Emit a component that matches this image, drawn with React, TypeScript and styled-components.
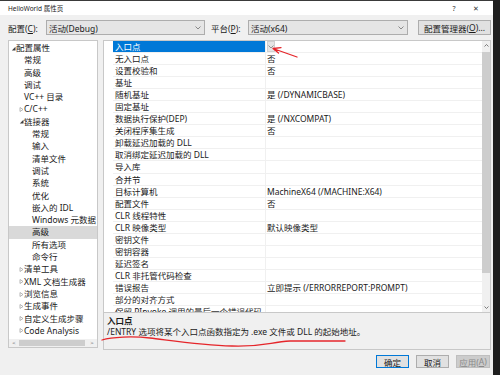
import React from 'react';
import styled, { createGlobalStyle } from 'styled-components';

const GlobalStyle = createGlobalStyle`
  html, body {
    margin: 0;
    padding: 0;
    background: #1f1f1f;
  }
  * {
    box-sizing: border-box;
  }
`;

const FONT = `"Noto Sans", "Noto Sans CJK SC", sans-serif`;

const Screen = styled.div`
  position: relative;
  width: 500px;
  height: 375px;
  display: flex;
  background: #1f1f1f;
  overflow: hidden;
  font-family: ${FONT};
  color: #1a1a1a;
`;

const Dialog = styled.div`
  width: 493px;
  height: 375px;
  border-top: 1px solid #3a3a3a;
  background: #f0f0f0;
  display: flex;
  flex-direction: column;
`;

const TitleBar = styled.div`
  height: 14px;
  flex: none;
  background: #ffffff;
  display: flex;
  align-items: center;
  padding: 0 6px 0 8px;
  font-size: 6.5px;
`;

const Title = styled.div`
  flex: 1;
`;

const TitleButton = styled.div`
  width: 22px;
  text-align: center;
  font-size: 7px;
  color: #333;
`;

const Body = styled.div`
  flex: 1;
  min-height: 0;
  display: flex;
  flex-direction: column;
  padding: 5px 2px 0 8px;
`;

const ConfigRow = styled.div`
  height: 15px;
  flex: none;
  display: flex;
  align-items: center;
  font-size: 8.5px;
`;

const Label = styled.div<{ w: number }>`
  width: ${p => p.w}px;
  white-space: nowrap;
`;

const Combo = styled.div<{ w: number, gap?: number }>`
  width: ${p => p.w}px;
  height: 15px;
  border: 1px solid #adadad;
  background: #e5e5e5;
  display: flex;
  align-items: center;
  padding: 0 3px 0 2px;
  margin-right: ${p => p.gap ?? 6}px;
`;

const ComboText = styled.div`
  flex: 1;
`;

const Chevron = styled.svg`
  width: 6px;
  height: 4px;
  flex: none;
`;

const PushButton = styled.div<{ w: number, kind?: 'default' | 'normal' | 'disabled' }>`
  width: ${p => p.w}px;
  height: ${p => p.kind ? 13 : 15}px;
  display: flex;
  align-items: center;
  justify-content: center;
  font-size: 8.5px;
  white-space: nowrap;
  background: ${p => p.kind === 'disabled' ? '#cccccc' : '#e1e1e1'};
  color: ${p => p.kind === 'disabled' ? '#8a8a8a' : '#1a1a1a'};
  border: 1px solid ${p => p.kind === 'default' ? '#0078d7' : p.kind === 'disabled' ? '#bfbfbf' : '#adadad'};
`;

const Main = styled.div`
  margin-top: 5px;
  height: 310px;
  flex: none;
  display: flex;
  gap: 5px;
  overflow: hidden;
`;

const TreePanel = styled.div`
  width: 90px;
  height: 308px;
  background: #ffffff;
  border: 1px solid #c8c8c8;
  display: flex;
  flex-direction: column;
  overflow: hidden;
`;

const TreeList = styled.div`
  flex: 1;
  min-height: 0;
  overflow: hidden;
  padding-top: 1px;
`;

const TreeRow = styled.div<{ level: number, selected?: boolean }>`
  height: 12.3px;
  line-height: 12.3px;
  font-size: 8.5px;
  white-space: nowrap;
  display: flex;
  align-items: center;
  padding-left: ${p => [1, 9, 17][p.level]}px;
  background: ${p => p.selected ? '#d9d9d9' : 'transparent'};
`;

const Expander = styled.div`
  width: 6px;
  display: flex;
  align-items: center;
  justify-content: center;
`;

const HScroll = styled.div`
  height: 8px;
  flex: none;
  display: flex;
  align-items: center;
  background: #f0f0f0;
  font-size: 6px;
  color: #606060;
`;

const ScrollArrow = styled.div`
  width: 10px;
  text-align: center;
  line-height: 8px;
`;

const HThumb = styled.div`
  flex: 1;
  height: 6px;
  margin-right: 2px;
  background: #cdcdcd;
`;

const RightColumn = styled.div`
  flex: 1;
  min-width: 0;
  display: flex;
  flex-direction: column;
`;

const GridPanel = styled.div`
  height: 273px;
  flex: none;
  background: #ffffff;
  border: 1px solid #c8c8c8;
  display: flex;
  overflow: hidden;
`;

const GridGutter = styled.div`
  width: 9px;
  background: #ffffff;
`;

const GridRows = styled.div`
  flex: 1;
  min-width: 0;
  overflow: hidden;
`;

const GridRow = styled.div`
  height: 12.05px;
  display: grid;
  grid-template-columns: 153px 1fr;
  border-bottom: 1px solid #f0f0f0;
  font-size: 8.5px;
  line-height: 11px;
  white-space: nowrap;
`;

const NameCell = styled.div<{ selected?: boolean }>`
  padding-left: 2px;
  border-right: 1px solid #f0f0f0;
  overflow: hidden;
  background: ${p => p.selected ? '#0078d7' : 'transparent'};
  color: ${p => p.selected ? '#ffffff' : '#1a1a1a'};
`;

const ValueCell = styled.div`
  padding-left: 1px;
  display: flex;
  justify-content: space-between;
  overflow: hidden;
`;

const DropButton = styled.div`
  width: 8px;
  height: 11px;
  background: #e5e5e5;
  border: 1px solid #d0d0d0;
  display: flex;
  align-items: center;
  justify-content: center;
`;

const VScroll = styled.div`
  width: 8px;
  flex: none;
  background: #f0f0f0;
  display: flex;
  flex-direction: column;
`;

const VArrow = styled.div`
  height: 9px;
  flex: none;
  display: flex;
  align-items: center;
  justify-content: center;
`;

const VThumb = styled.div`
  margin-top: 2px;
  height: 221px;
  flex: none;
  background: #cdcdcd;
`;

const VTrack = styled.div`
  flex: 1;
`;

const Description = styled.div`
  height: 37px;
  flex: none;
  border: 1px solid #c8c8c8;
  border-top: none;
  padding: 2px 3px;
  font-size: 8.5px;
  line-height: 11px;
`;

const DescTitle = styled.div`
  font-weight: bold;
`;

const ButtonRow = styled.div`
  margin-top: 5px;
  display: flex;
  justify-content: flex-end;
  gap: 7px;
  padding-right: 1px;
`;

const Overlay = styled.svg`
  position: absolute;
  left: 0;
  top: 0;
  width: 500px;
  height: 375px;
  pointer-events: none;
`;

const ChevronDown = ({ color = '#707070' }: { color?: string }) => (
  <Chevron viewBox="0 0 6 4">
    <path d="M0.5 0.5 L3 3 L5.5 0.5" fill="none" stroke={color} strokeWidth="0.8" />
  </Chevron>
);

const TreeArrow = ({ open }: { open: boolean }) => (
  <svg width="5" height="5" viewBox="0 0 5 5">
    {open
      ? <path d="M4.5 0.8 L4.5 4.5 L0.8 4.5 Z" fill="#404040" />
      : <path d="M1 0.5 L4 2.5 L1 4.5 Z" fill="none" stroke="#9a9a9a" strokeWidth="0.7" />}
  </svg>
);

type TreeItem = { label: string, level: number, arrow?: 'open' | 'closed', selected?: boolean };

const tree: TreeItem[] = [
  { label: '配置属性', level: 0, arrow: 'open' },
  { label: '常规', level: 1 },
  { label: '高级', level: 1 },
  { label: '调试', level: 1 },
  { label: 'VC++ 目录', level: 1 },
  { label: 'C/C++', level: 1, arrow: 'closed' },
  { label: '链接器', level: 1, arrow: 'open' },
  { label: '常规', level: 2 },
  { label: '输入', level: 2 },
  { label: '清单文件', level: 2 },
  { label: '调试', level: 2 },
  { label: '系统', level: 2 },
  { label: '优化', level: 2 },
  { label: '嵌入的 IDL', level: 2 },
  { label: 'Windows 元数据', level: 2 },
  { label: '高级', level: 2, selected: true },
  { label: '所有选项', level: 2 },
  { label: '命令行', level: 2 },
  { label: '清单工具', level: 1, arrow: 'closed' },
  { label: 'XML 文档生成器', level: 1, arrow: 'closed' },
  { label: '浏览信息', level: 1, arrow: 'closed' },
  { label: '生成事件', level: 1, arrow: 'closed' },
  { label: '自定义生成步骤', level: 1, arrow: 'closed' },
  { label: 'Code Analysis', level: 1, arrow: 'closed' },
];

const props: [string, string][] = [
  ['入口点', ''],
  ['无入口点', '否'],
  ['设置校验和', '否'],
  ['基址', ''],
  ['随机基址', '是 (/DYNAMICBASE)'],
  ['固定基址', ''],
  ['数据执行保护(DEP)', '是 (/NXCOMPAT)'],
  ['关闭程序集生成', '否'],
  ['卸载延迟加载的 DLL', ''],
  ['取消绑定延迟加载的 DLL', ''],
  ['导入库', ''],
  ['合并节', ''],
  ['目标计算机', 'MachineX64 (/MACHINE:X64)'],
  ['配置文件', '否'],
  ['CLR 线程特性', ''],
  ['CLR 映像类型', '默认映像类型'],
  ['密钥文件', ''],
  ['密钥容器', ''],
  ['延迟签名', ''],
  ['CLR 非托管代码检查', ''],
  ['错误报告', '立即提示 (/ERRORREPORT:PROMPT)'],
  ['部分的对齐方式', ''],
  ['保留 PInvoke 调用的最后一个错误代码', ''],
];

export default function App() {
  return (
    <Screen>
      <GlobalStyle />
      <Dialog>
        <TitleBar>
          <Title>HelloWorld 属性页</Title>
          <TitleButton>?</TitleButton>
          <TitleButton>✕</TitleButton>
        </TitleBar>
        <Body>
          <ConfigRow>
            <Label w={38}>配置(<u>C</u>):</Label>
            <Combo w={159}>
              <ComboText>活动(Debug)</ComboText>
              <ChevronDown />
            </Combo>
            <Label w={37}>平台(<u>P</u>):</Label>
            <Combo w={160} gap={10}>
              <ComboText>活动(x64)</ComboText>
              <ChevronDown />
            </Combo>
            <PushButton w={73}>配置管理器(<u>O</u>)...</PushButton>
          </ConfigRow>

          <Main>
            <TreePanel>
              <TreeList>
                {tree.map((t, i) => (
                  <TreeRow key={i} level={t.level} selected={t.selected}>
                    <Expander>{t.arrow && <TreeArrow open={t.arrow === 'open'} />}</Expander>
                    {t.label}
                  </TreeRow>
                ))}
              </TreeList>
              <HScroll>
                <ScrollArrow>&lt;</ScrollArrow>
                <HThumb />
                <ScrollArrow>&gt;</ScrollArrow>
              </HScroll>
            </TreePanel>

            <RightColumn>
              <GridPanel>
                <GridGutter />
                <GridRows>
                  {props.map(([name, value], i) => (
                    <GridRow key={i}>
                      <NameCell selected={i === 0}>{name}</NameCell>
                      <ValueCell>
                        {value}
                        {i === 0 && (
                          <DropButton>
                            <ChevronDown color="#808080" />
                          </DropButton>
                        )}
                      </ValueCell>
                    </GridRow>
                  ))}
                </GridRows>
                <VScroll>
                  <VArrow>
                    <svg width="5" height="3" viewBox="0 0 5 3">
                      <path d="M0.5 2.5 L2.5 0.5 L4.5 2.5" fill="none" stroke="#606060" strokeWidth="0.8" />
                    </svg>
                  </VArrow>
                  <VThumb />
                  <VTrack />
                  <VArrow>
                    <svg width="5" height="3" viewBox="0 0 5 3">
                      <path d="M0.5 0.5 L2.5 2.5 L4.5 0.5" fill="none" stroke="#606060" strokeWidth="0.8" />
                    </svg>
                  </VArrow>
                </VScroll>
              </GridPanel>
              <Description>
                <DescTitle>入口点</DescTitle>
                <div>/ENTRY 选项将某个入口点函数指定为 .exe 文件或 DLL 的起始地址。</div>
              </Description>
            </RightColumn>
          </Main>

          <ButtonRow>
            <PushButton w={33} kind="default">确定</PushButton>
            <PushButton w={33} kind="normal">取消</PushButton>
            <PushButton w={34} kind="disabled">应用(<u>A</u>)</PushButton>
          </ButtonRow>
        </Body>
      </Dialog>

      <Overlay viewBox="0 0 500 375">
        <path d="M297 57 L273 48.5 M273 48.5 L281 47.6 M273 48.5 L278.5 53"
          fill="none" stroke="#e5262b" strokeWidth="1.3" strokeLinecap="round" />
        <path d="M102 340 C 112 337, 132 336, 150 338 S 200 345, 232 346 S 270 342, 290 341 L 345 341"
          fill="none" stroke="#e5262b" strokeWidth="1.3" strokeLinecap="round" />
      </Overlay>
    </Screen>
  );
}
